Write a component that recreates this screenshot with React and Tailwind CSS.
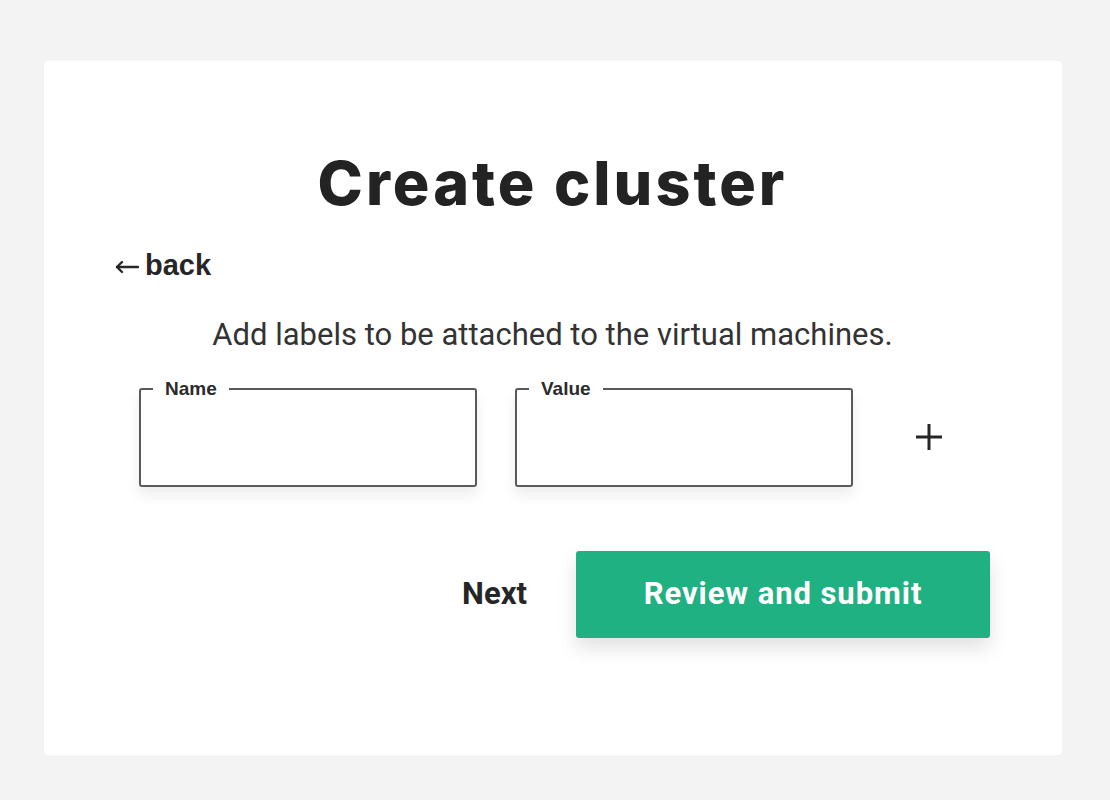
const LabelField = ({ label }) => (
  <fieldset className="w-[338px] h-[108px] border-2 border-[#5a5a5a] rounded-[3px] px-3 shadow-[0_8px_14px_rgba(0,0,0,0.08)]">
    <legend className="px-3 text-[19px] leading-none font-bold text-[#2b2b2b] font-['Liberation_Sans',Arial,sans-serif]">
      {label}
    </legend>
    <input type="text" className="w-full h-[70px] bg-transparent outline-none text-lg" />
  </fieldset>
)

const App = () => {
  return (
    <div className="min-h-screen bg-[#f3f3f3] pt-[61px] pl-[44px]">
      <div className="w-[1018px] h-[694px] bg-white rounded-sm pl-[71px] pr-[72px] pt-[86px] font-['Roboto',sans-serif] text-[#262626]">
        <h1 className="text-center text-[61px] leading-[72px] font-extrabold tracking-[0.05em] font-['Inter',sans-serif] text-[#232323]">
          Create cluster
        </h1>

        <div className="mt-[30px] flex items-center text-[29px] leading-8 font-bold font-['Liberation_Sans',Arial,sans-serif]">
          <svg width="24" height="16" viewBox="0 0 24 16" className="mr-[6px] mt-[3px]" fill="none" stroke="#262626" strokeWidth="2.4" strokeLinecap="round" strokeLinejoin="round">
            <path d="M23 8H2" />
            <path d="M7 3L2 8l5 5" />
          </svg>
          back
        </div>

        <p className="mt-[36px] text-center text-[31px] leading-9 text-[#333]">
          Add labels to be attached to the virtual machines.
        </p>

        <div className="mt-[26px] ml-[24px] flex items-center">
          <LabelField label="Name" />
          <div className="ml-[38px]">
            <LabelField label="Value" />
          </div>
          <button className="ml-[62px] mt-[8px] text-[#262626]">
            <svg width="28" height="28" viewBox="0 0 28 28" fill="none" stroke="currentColor" strokeWidth="3">
              <path d="M14 1v26M1 14h26" />
            </svg>
          </button>
        </div>

        <div className="mt-[64px] flex items-center justify-end">
          <button className="text-[31px] font-bold text-[#262626] mr-[49px]">Next</button>
          <button className="w-[414px] h-[87px] bg-[#1fb182] rounded-[3px] text-white text-[31px] font-bold tracking-[0.03em] shadow-[0_10px_20px_rgba(0,0,0,0.12)]">
            Review and submit
          </button>
        </div>
      </div>
    </div>
  )
}

export default App
